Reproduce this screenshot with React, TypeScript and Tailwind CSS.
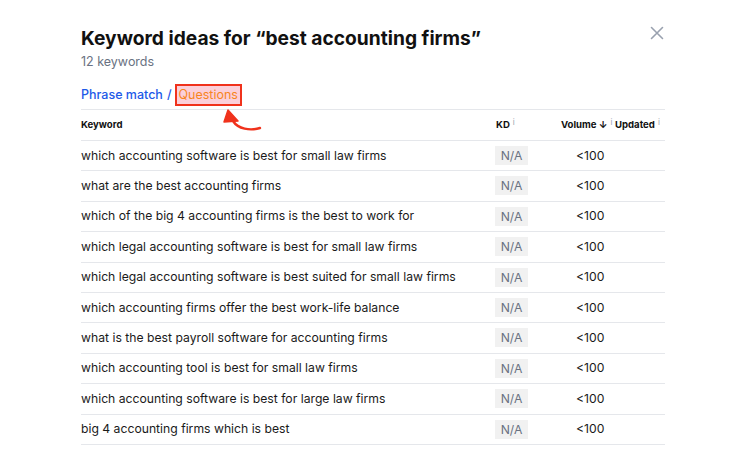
import React from 'react';

const rows = [
  'which accounting software is best for small law firms',
  'what are the best accounting firms',
  'which of the big 4 accounting firms is the best to work for',
  'which legal accounting software is best for small law firms',
  'which legal accounting software is best suited for small law firms',
  'which accounting firms offer the best work-life balance',
  'what is the best payroll software for accounting firms',
  'which accounting tool is best for small law firms',
  'which accounting software is best for large law firms',
  'big 4 accounting firms which is best',
];

const Info = () => <span className="ml-[3px] text-[8px] font-normal text-gray-400 align-top relative -top-[2px]">i</span>;

export default function App() {
  return (
    <div className="w-[750px] h-[450px] bg-white overflow-hidden relative" style={{ fontFamily: 'Inter, "Noto Sans", sans-serif' }}>
      <button className="absolute left-[650px] top-[26px] text-gray-400">
        <svg width="14" height="14" viewBox="0 0 14 14" fill="none" stroke="currentColor" strokeWidth="1.6" strokeLinecap="round">
          <path d="M1.5 1.5l11 11M12.5 1.5l-11 11" />
        </svg>
      </button>
      <div className="ml-[81px] w-[584px] pt-[24px]">
        <h1 className="text-[19.2px] leading-[28px] font-bold text-[#111]">Keyword ideas for “best accounting firms”</h1>
        <div className="text-[12.5px] leading-[18px] text-gray-500 mt-[1px]">12 keywords</div>
        <div className="flex items-center h-[24px] mt-[12px] text-[12.5px] font-medium">
          <span className="text-[#1d5ae8]">Phrase match</span>
          <span className="ml-[4px] mr-[3px] text-[#1d5ae8]">/</span>
          <span className="relative border-2 border-[#f0321c] bg-[#fbd0da] text-[#f7861f] px-[2px] h-[22px] leading-[18px] font-normal">Questions</span>
        </div>
        <svg className="absolute left-[218px] top-[106px]" width="48" height="28" viewBox="0 0 48 28" fill="none">
          <path d="M42 22 C32 25 20 23 15 15" stroke="#f0321c" strokeWidth="2.4" strokeLinecap="round" />
          <path d="M10 4 L20 15 L6 16 Z" fill="#f0321c" stroke="#f0321c" strokeWidth="1.5" strokeLinejoin="round" />
        </svg>
        <div className="border-t border-gray-200 mt-[2px]">
          <div className="flex items-center h-[31px] border-b border-gray-200 text-[9.6px] font-bold text-[#111] whitespace-nowrap">
            <div className="w-[414px]">Keyword</div>
            <div className="w-[66px] pl-[1px]">KD<Info /></div>
            <div className="w-[54px]">Volume <span className="font-bold">↓</span><Info /></div>
            <div className="flex-1">Updated<Info /></div>
          </div>
          {rows.map((r) => (
            <div key={r} className="flex items-center h-[30.4px] border-b border-gray-200 text-[12.2px] text-[#1a1a1a]">
              <div className="w-[414px] truncate">{r}</div>
              <div className="w-[66px]">
                <span className="inline-block bg-[#f1f1f1] text-gray-500 h-[19px] leading-[19px] w-[33px] text-center">N/A</span>
              </div>
              <div className="w-[54px] pl-[15px]">&lt;100</div>
              <div className="flex-1" />
            </div>
          ))}
        </div>
      </div>
    </div>
  );
}
